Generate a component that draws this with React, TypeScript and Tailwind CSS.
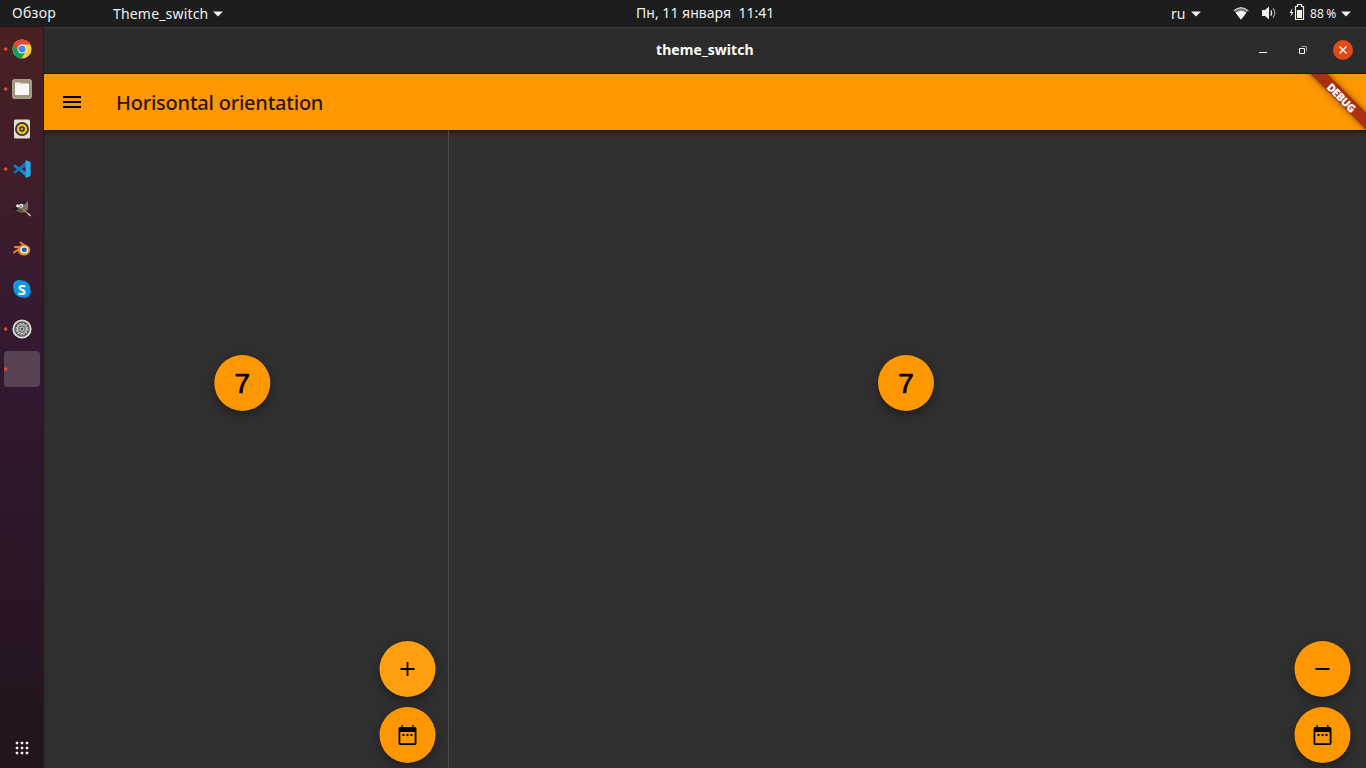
import React from "react";

const Caret = () => (
  <svg width="10" height="6" viewBox="0 0 10 6" className="shrink-0">
    <path d="M0 .5h10L5 5.6z" fill="#f2f2f2" />
  </svg>
);

function TopBar() {
  return (
    <header className="flex h-[27px] shrink-0 bg-[#1d1d1d] text-[14px] leading-[26px] whitespace-nowrap text-[#f0f0f0]">
      <span className="ml-[12px] w-[101px] tracking-[0.3px]">Обзор</span>
      <span className="flex w-[523px] items-center gap-[5px]">
        <span className="w-[95px] tracking-[0.18px]">Theme_switch</span>
        <Caret />
      </span>
      <span className="w-[535px] tracking-[0.03px] whitespace-pre">Пн, 11 января  11:41</span>
      <span className="flex w-[62px] items-center gap-[5px]">
        <span className="w-[15px]">ru</span>
        <Caret />
      </span>
      <span className="flex items-center">
        <svg width="16" height="16" viewBox="0 0 16 16" className="shrink-0">
          <path d="M1 4.6Q8-1.5 15 4.6L8 13.4z" fill="#777" />
          <path d="M.6 4.8Q8-1.4 15.4 4.8" fill="none" stroke="#f2f2f2" strokeWidth="1" />
          <path d="M2.6 6.8Q8 2.6 13.4 6.8L8 13.8z" fill="#f2f2f2" />
        </svg>
        <svg width="16" height="16" viewBox="0 0 16 16" className="mb-[2px] ml-[12px] shrink-0">
          <path d="M1 5h3l4-3.6v13L4 11H1z" fill="#f2f2f2" />
          <path d="M9.7 5.4q1.8 2.6 0 5.2" fill="none" stroke="#f2f2f2" strokeWidth="1.3" />
          <path d="M12 3.4q3.6 4.6 0 9.2" fill="none" stroke="#aaa" strokeWidth="1.2" />
        </svg>
        <svg width="16" height="18" viewBox="0 0 16 18" className="mb-[3px] ml-[12px] shrink-0">
          <path d="M3.5 5L.6 10h1.8l-.8 4L4.500 9H2.600z" fill="#f2f2f2" />
          <path d="M6.500 3.500h2v-2h4v2h2v13h-8z" fill="none" stroke="#f2f2f2" strokeWidth="1.200" />
          <path d="M8 7h5v8H8z" fill="#f2f2f2" />
        </svg>
        <span className="ml-[5px] w-[27px] text-[12px] tracking-[0.1px] [word-spacing:-1px]">88 %</span>
        <span className="ml-[4px] flex"><Caret /></span>
      </span>
    </header>
  );
}

const Chrome = () => (
  <svg width="20" height="20" viewBox="0 0 20 20">
    <circle cx="10" cy="10" r="9.6" fill="#ffcd40" />
    <path d="M10 10L1.7 5.2A9.6 9.6 0 0 0 9.5 19.6L14 12z" fill="#109d58" />
    <path d="M1.7 5.2A9.6 9.6 0 0 1 18.4 5.6H10L6 12z" fill="#de4b3c" />
    <circle cx="10" cy="10" r="4.5" fill="#f1f1f1" />
    <circle cx="10" cy="10" r="3.6" fill="#4285f4" />
  </svg>
);
const Files = () => (
  <svg width="20" height="20" viewBox="0 0 20 20">
    <rect x=".6" y=".6" width="18.8" height="18.8" rx="1.5" fill="#9f9581" stroke="#c0b9a7" strokeWidth=".8" />
    <path d="M3 4.5q0-1 1-1h4l1 1h7q1 0 1 1v9.5q0 1-1 1H4q-1 0-1-1z" fill="#f8f8f6" />
    <path d="M3.5 5.5h5l1-.8" fill="none" stroke="#dedbd2" strokeWidth=".7" />
  </svg>
);
const Music = () => (
  <svg width="20" height="20" viewBox="0 0 20 20">
    <rect x="2" y=".5" width="16" height="19" rx="1.5" fill="#e3dfd5" />
    <circle cx="10" cy="10" r="7" fill="#343434" />
    <circle cx="10" cy="10" r="4" fill="#343434" stroke="#efbd18" strokeWidth="2.4" />
    <circle cx="10" cy="10" r="1.3" fill="#bca34c" />
  </svg>
);
const Code = () => (
  <svg width="20" height="20" viewBox="0 0 20 20">
    <path d="M1 6.7l2-1.200L15 13.400v5.100z" fill="#1685cb" />
    <path d="M1 13.300l2 1.200L15 6.600V1.500z" fill="#0f75b8" />
    <path d="M13.600 1l5 2v14l-5 2z" fill="#2aa6ed" />
  </svg>
);
const Gimp = () => (
  <svg width="20" height="20" viewBox="0 0 20 20">
    <path d="M4 7.5L9 5l4 .6 2.6-4.2.8 5.6-.9 4q-3 3.4-7.5 2.200L4 11.500 2 10z" fill="#777365" />
    <path d="M.6 9l3-1.500L6.500 9 5.500 11.200 1 11z" fill="#1c1c1c" />
    <circle cx="5.600" cy="6.800" r="1.500" fill="#eee" />
    <circle cx="9.200" cy="6.800" r="2" fill="#f1f1ed" />
    <circle cx="9" cy="7" r=".8" fill="#222" />
    <path d="M6 11l7 1" stroke="#464239" strokeWidth="1.200" />
    <path d="M11 11l5 3.500" stroke="#d68b3b" strokeWidth="1.200" />
    <path d="M16 14.500l2.500 2.500" stroke="#ddd" strokeWidth="1.200" />
  </svg>
);
const Blender = () => (
  <svg width="20" height="20" viewBox="0 0 20 20">
    <path d="M3 8h8M8.500 3.500l6 4.500M2 13.500L9 8.500" stroke="#ee8625" strokeWidth="2" strokeLinecap="round" />
    <ellipse cx="12" cy="11" rx="6.200" ry="5.600" fill="#ee8625" />
    <ellipse cx="12.200" cy="10.800" rx="4" ry="3.600" fill="#fff" />
    <ellipse cx="12.400" cy="10.800" rx="2.600" ry="2.300" fill="#1f5c9e" />
  </svg>
);
const Skype = () => (
  <span className="relative flex h-5 w-5 items-center justify-center">
    <svg width="20" height="20" viewBox="0 0 20 20" className="absolute inset-0">
      <circle cx="7" cy="7" r="5.9" fill="#17a5e4" />
      <circle cx="13" cy="13" r="5.9" fill="#0b83d2" />
      <circle cx="10" cy="10" r="8.4" fill="#0b96dd" />
    </svg>
    <span className="relative font-['Open_Sans',sans-serif] text-[15px] leading-none font-bold text-white">S</span>
  </span>
);
const Settings = () => (
  <svg width="20" height="20" viewBox="0 0 20 20">
    <circle cx="10" cy="10" r="8.7" fill="#5a5a5a" stroke="#dcdcd9" strokeWidth="1.8" />
    <circle cx="10" cy="10" r="5.700" fill="none" stroke="#c7c7c4" strokeWidth="1.400" strokeDasharray="1.600 1.380" />
    <circle cx="10" cy="10" r="4.400" fill="#666" stroke="#c7c7c4" strokeWidth="1.400" />
    <path d="M10 6v8M6.500 8l7 4M13.500 8l-7 4" stroke="#999" strokeWidth=".8" />
    <circle cx="10" cy="10" r="1.900" fill="#4d4d4d" stroke="#ccc" strokeWidth="1" />
  </svg>
);

const apps = [
  { Icon: Chrome, running: true },
  { Icon: Files, running: true },
  { Icon: Music, running: false },
  { Icon: Code, running: true },
  { Icon: Gimp, running: false },
  { Icon: Blender, running: false },
  { Icon: Skype, running: false },
  { Icon: Settings, running: true },
];

const Dot = () => (
  <svg width="4" height="4" viewBox="0 0 4 4" className="mb-[1px] shrink-0">
    <circle cx="1.7" cy="2" r="1.7" fill="#e95420" />
  </svg>
);

function Dock() {
  return (
    <nav className="flex w-[44px] shrink-0 flex-col border-r border-[#2a1520] bg-linear-to-b from-[#4a2022] via-[#321831] via-45% to-[#22141d] pt-[2px]">
      {apps.map(({ Icon, running }, i) => (
        <div key={i} className="flex h-[40px] items-center">
          <span className="flex w-[12px] pl-[4px]">{running && <Dot />}</span>
          <Icon />
        </div>
      ))}
      <div className="mt-[2px] ml-[4px] flex h-[36px] w-[36px] items-center rounded-[4px] bg-[#584355]">
        <Dot />
      </div>
      <svg width="14" height="14" viewBox="0 0 14 14" className="mt-auto mb-[13px] ml-[15px]" fill="#f4f4f4">
        {[1, 6, 11].map((y) => [1, 6, 11].map((x) => <rect key={`${x}-${y}`} x={x - 0.2} y={y - 0.2} width="2.4" height="2.4" rx=".5" />))}
      </svg>
    </nav>
  );
}

function Disc({ children, light = false }: { children: React.ReactNode; light?: boolean }) {
  return (
    <div
      className={`flex h-[56px] w-[56px] items-center justify-center rounded-full text-black shadow-[0_3px_5px_-1px_rgba(0,0,0,0.2),0_6px_10px_rgba(0,0,0,0.14),0_1px_18px_rgba(0,0,0,0.12)] ${light ? "bg-[#ff9e0f]" : "bg-[#ff9800]"}`}
    >
      {children}
    </div>
  );
}

const Calendar = () => (
  <svg width="24" height="24" viewBox="0 0 24 24">
    <path fillRule="evenodd" d="M6 2h1.300v2h9.400V2H18v2h1.300Q21 4 21 5.700v14.600Q21 22 19.300 22H4.700Q3 22 3 20.300V5.700Q3 4 4.700 4H6zM4.800 9v11.200h14.400V9zM7 11h2v2H7zm4 0h2v2h-2zm4 0h2v2h-2z" />
  </svg>
);

const Seven = () => (
  <span className="pt-[2px] font-['Liberation_Sans',sans-serif] text-[28px] leading-none [-webkit-text-stroke:0.7px_black]">7</span>
);

function Pane({ side }: { side: "left" | "right" }) {
  const left = side === "left";
  return (
    <section
      className={`flex flex-col ${left ? "w-[405px] shrink-0 border-r border-[#4a4a4a] pr-[12px]" : "flex-1 pr-[15px]"} pt-[225px] pb-[5px]`}
    >
      <div className={left ? "ml-[170px] w-[56px] translate-x-[0.3px]" : "ml-[429px]"}>
        <Disc><Seven /></Disc>
      </div>
      <div className="mt-auto flex translate-x-[-0.5px] flex-col gap-[10px] self-end">
        <Disc light={left}>
          <svg width="24" height="24" viewBox="0 0 24 24">
            <path d={left ? "M19 12.900h-6.100v6.100h-1.800v-6.100H5v-1.800h6.100V5h1.800v6.100H19z" : "M19 12.900H5v-1.800h14z"} />
          </svg>
        </Disc>
        <Disc><Calendar /></Disc>
      </div>
    </section>
  );
}

export default function App() {
  return (
    <div className="flex h-[768px] w-[1366px] flex-col overflow-hidden bg-[#303030] font-['Noto_Sans','Open_Sans',sans-serif]">
      <TopBar />
      <div className="flex min-h-0 flex-1">
        <Dock />
        <main className="flex min-w-0 flex-1 flex-col">
          <div className="flex h-[47px] shrink-0 items-center border-t border-b border-t-[#3d3d3d] border-b-[#191919] bg-[#2c2c2c] pb-[2px]">
            <h1 className="ml-[612px] w-[603px] text-[14px] font-bold tracking-[0.07px] text-white">theme_switch</h1>
            <svg width="8" height="8" viewBox="0 0 8 8"><path d="M0 6h8v1H0z" fill="#fff" /></svg>
            <svg width="8" height="8" viewBox="0 0 8 8" className="ml-[32px]">
              <path d="M2.5.5h5v5" fill="none" stroke="#999" />
              <path d="M.5 2.5h5v5h-5z" fill="none" stroke="#fff" />
            </svg>
            <span className="ml-[26px] flex h-[20px] w-[20px] items-center justify-center rounded-full bg-[#df4a16]">
              <svg width="8" height="8" viewBox="0 0 8 8"><path d="M.5.5l7 7m0-7l-7 7" stroke="#fff" strokeWidth="1.4" /></svg>
            </span>
          </div>
          <div className="relative z-10 flex h-[56px] shrink-0 items-center overflow-hidden bg-[#ff9800]">
            <svg width="24" height="24" viewBox="0 0 24 24" className="ml-[16px]">
              <path d="M3 18h18v-2H3v2zm0-5h18v-2H3v2zm0-7v2h18V6H3z" />
            </svg>
            <h2 className="ml-[32px] pt-[1px] text-[20px] font-medium tracking-[-0.23px] whitespace-nowrap text-black/87">Horisontal orientation</h2>
            <div className="absolute top-[17px] right-[-26px] flex h-[12px] w-[100px] rotate-45 items-center justify-center bg-[#ab3012] text-[11px] leading-none font-black tracking-[-0.5px] text-white shadow-[0_0_6px_rgba(0,0,0,0.5)]">
              DEBUG
            </div>
          </div>
          <div className="flex min-h-0 flex-1 shadow-[inset_0_4px_5px_-2px_rgba(0,0,0,0.5)]">
            <Pane side="left" />
            <Pane side="right" />
          </div>
        </main>
      </div>
    </div>
  );
}
